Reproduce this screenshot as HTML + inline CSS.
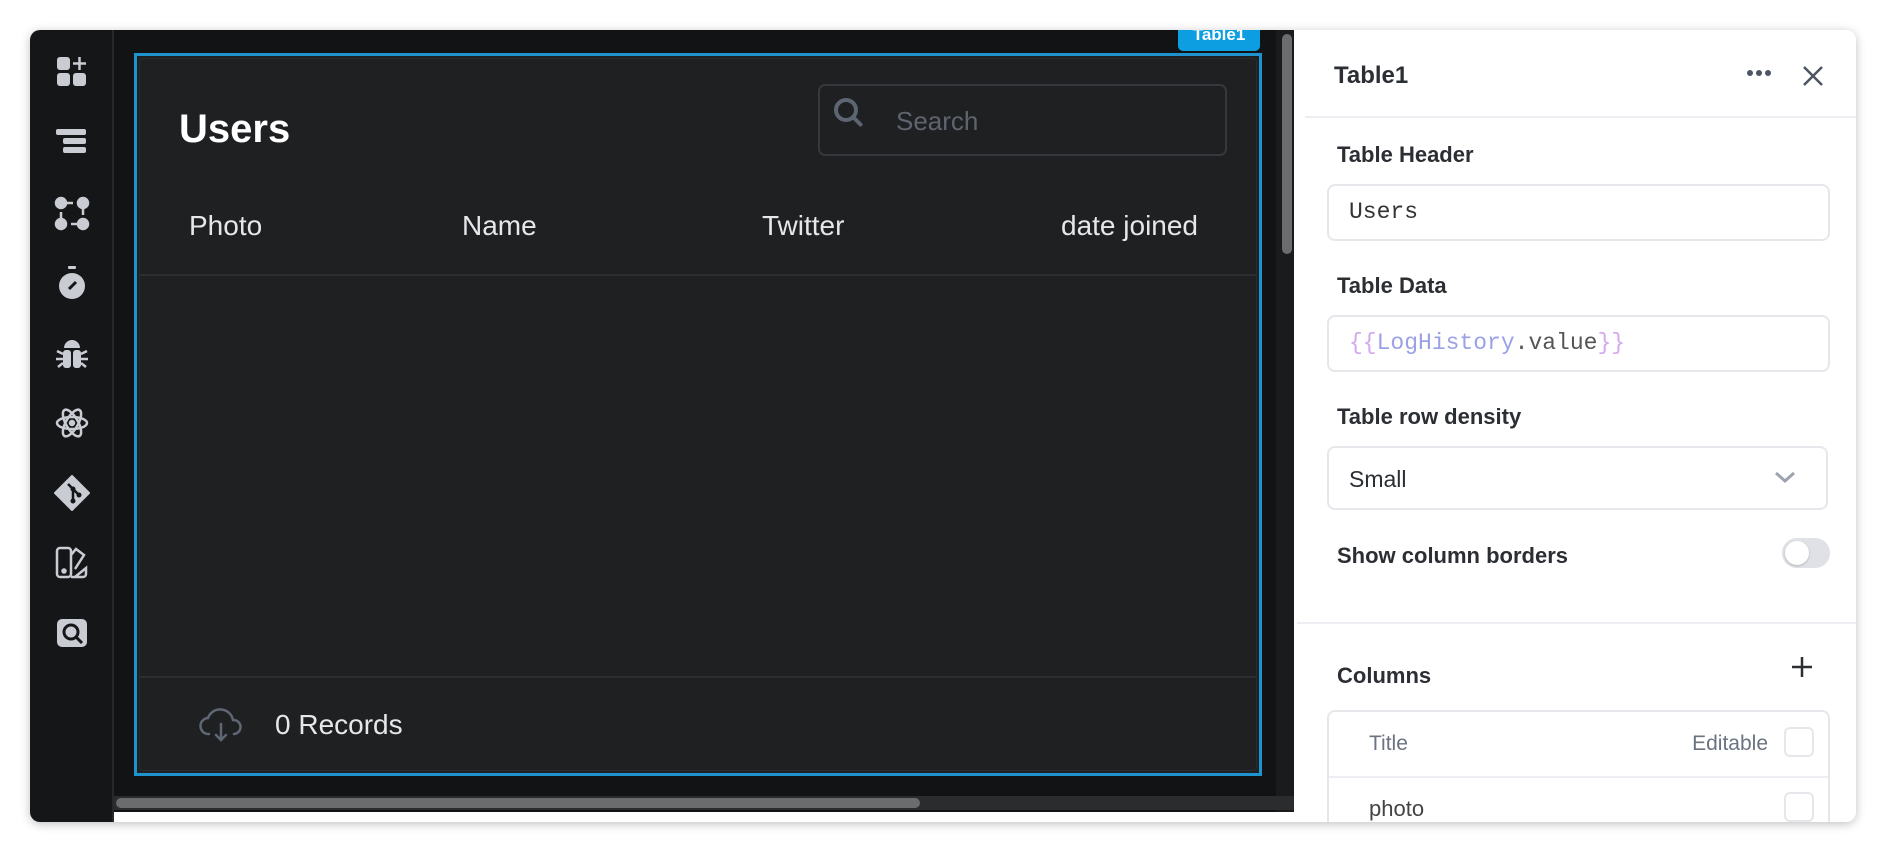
<!DOCTYPE html>
<html><head><meta charset="utf-8"><style>
*{margin:0;padding:0;box-sizing:border-box}
body{width:1886px;height:852px;background:#fff;position:relative;overflow:hidden;font-family:"Liberation Sans",sans-serif}
.abs{position:absolute}
#win{left:30px;top:30px;width:1826px;height:792px;border-radius:10px;overflow:hidden;background:#fff;box-shadow:0 2px 10px rgba(0,0,0,.25)}
#side{left:0;top:0;width:84px;height:792px;background:#151618;border-right:2px solid #26282b}
#canvas{left:84px;top:0;width:1180px;height:792px;background:#121315}
.ico{position:absolute;left:24px;width:36px;height:36px}
.th{position:absolute;font-size:28px;color:#e6e7ea}
.lbl{position:absolute;left:1307px;font-size:22px;color:#2b2e33;font-weight:bold}
.inp{position:absolute;left:1297px;width:503px;border:2px solid #e5e7eb;border-radius:8px;background:#fff}
.mono{font-family:"Liberation Mono",monospace;font-size:23px}
</style></head><body>
<div id="win" class="abs">
 <div id="side" class="abs">
  <svg class="ico" style="top:24px" viewBox="0 0 36 36" fill="#c9ccd3"><rect x="3" y="3" width="13" height="13" rx="3"/><rect x="3" y="19" width="13" height="13" rx="3"/><rect x="19" y="19" width="13" height="13" rx="3"/><path d="M25.5 3v13M19 9.5h13" stroke="#c9ccd3" stroke-width="2.5"/></svg>
  <svg class="ico" style="top:94px" viewBox="0 0 36 36" fill="#c9ccd3"><rect x="2" y="5" width="30" height="6" rx="2"/><rect x="9" y="14" width="23" height="6" rx="2"/><rect x="9" y="23" width="23" height="6" rx="2"/></svg>
  <svg class="ico" style="top:165px" viewBox="0 0 36 36" fill="#c9ccd3" stroke="#c9ccd3" stroke-width="2.5"><circle cx="7" cy="8" r="5"/><circle cx="29" cy="8" r="5"/><circle cx="7" cy="29" r="5"/><circle cx="29" cy="29" r="5"/><path d="M12 8h7M29 13v7M7 17v7M17 29h7"/></svg>
  <svg class="ico" style="top:235px" viewBox="0 0 36 36" fill="#c9ccd3"><rect x="14" y="1" width="8" height="3" rx="1"/><circle cx="18" cy="21" r="13"/><path d="M15 24l7-7" stroke="#151618" stroke-width="3"/></svg>
  <svg class="ico" style="top:305px" viewBox="0 0 36 36" fill="#c9ccd3"><path d="M10 13a8 8 0 0116 0z"/><rect x="9" y="15" width="8" height="18" rx="3"/><rect x="19" y="15" width="8" height="18" rx="3"/><path d="M3 16l6 3M33 16l-6 3M2 24h7M34 24h-7M4 32l5-4M32 32l-5-4" stroke="#c9ccd3" stroke-width="2.5"/></svg>
  <svg class="ico" style="top:375px" viewBox="0 0 36 36" fill="none" stroke="#c9ccd3" stroke-width="2.5"><ellipse cx="18" cy="18" rx="15" ry="6"/><ellipse cx="18" cy="18" rx="15" ry="6" transform="rotate(60 18 18)"/><ellipse cx="18" cy="18" rx="15" ry="6" transform="rotate(-60 18 18)"/><circle cx="18" cy="18" r="2" fill="#c9ccd3"/></svg>
  <svg class="ico" style="top:445px" viewBox="0 0 36 36"><path d="M18 1L35 18 18 35 1 18z" fill="#c9ccd3" stroke="#c9ccd3" stroke-width="2" stroke-linejoin="round"/><path d="M14 9l5 5M19 14v12M19 14l6 6" stroke="#151618" stroke-width="2.5" fill="none"/><circle cx="19" cy="14" r="2.5" fill="#151618"/><circle cx="19" cy="26" r="2.5" fill="#151618"/><circle cx="25" cy="20" r="2.5" fill="#151618"/></svg>
  <svg class="ico" style="top:515px" viewBox="0 0 36 36" fill="none" stroke="#c9ccd3" stroke-width="2.5"><rect x="3" y="3" width="14" height="29" rx="3"/><path d="M17 10l5-6 8 6-9 14M17 32h12a3 3 0 003-3v-6l-11 9"/><circle cx="10" cy="26" r="1.5" fill="#c9ccd3"/></svg>
  <svg class="ico" style="top:585px" viewBox="0 0 36 36"><rect x="3" y="4" width="30" height="28" rx="5" fill="#c9ccd3"/><circle cx="17" cy="17" r="7" fill="none" stroke="#151618" stroke-width="3"/><path d="M22 22l6 6" stroke="#151618" stroke-width="3"/></svg>
 </div>
 <div id="canvas" class="abs">
  <div class="abs" style="left:1162px;top:0;width:18px;height:782px;background:#1a1b1d"></div>
  <div class="abs" style="left:1168px;top:4px;width:10px;height:220px;background:#6b6c6e;border-radius:5px"></div>
  <div class="abs" style="left:0;top:766px;width:1180px;height:14px;background:#2b2c2e"></div>
  <div class="abs" style="left:2px;top:768px;width:804px;height:10px;background:#6b6c6e;border-radius:5px"></div>
  <div class="abs" style="left:0;top:782px;width:1180px;height:10px;background:#fff"></div>
  <div class="abs" style="left:1064px;top:-6px;width:82px;height:27px;background:#0c9ee0;border-radius:5px;color:#fff;font-size:17px;font-weight:bold;text-align:center;line-height:22px">Table1</div>
  <div class="abs" style="left:20px;top:23px;width:1128px;height:723px;border:3px solid #1f93cf;background:#1f2022">
   <div class="abs" style="left:2px;top:2px;right:2px;bottom:2px;border:1px solid #2a2c30;border-radius:4px"></div>
   <div class="abs" style="left:42px;top:51px;font-size:40px;font-weight:bold;color:#fff">Users</div>
   <div class="abs" style="left:681px;top:28px;width:409px;height:72px;border:2px solid #35383d;border-radius:7px">
    <svg class="abs" style="left:12px;top:10px" width="34" height="34" viewBox="0 0 34 34" fill="none" stroke="#5d6572" stroke-width="4"><circle cx="14" cy="14" r="10"/><path d="M21.5 21.5l7 7" stroke-linecap="round"/></svg>
    <div class="abs" style="left:76px;top:20px;font-size:26px;color:#5e646d">Search</div>
   </div>
   <div class="th" style="left:52px;top:154px">Photo</div>
   <div class="th" style="left:325px;top:154px">Name</div>
   <div class="th" style="left:625px;top:154px">Twitter</div>
   <div class="th" style="left:924px;top:154px">date joined</div>
   <div class="abs" style="left:3px;right:3px;top:218px;height:2px;background:#2c2e31"></div>
   <div class="abs" style="left:3px;right:3px;top:620px;height:2px;background:#2c2e31"></div>
   <svg class="abs" style="left:62px;top:650px" width="44" height="40" viewBox="0 0 44 40" fill="none" stroke="#5f6774" stroke-width="2.5" stroke-linecap="round"><path d="M10 28a8 8 0 01-1-16 13 13 0 0125 2 7 7 0 011 14"/><path d="M22 18v16M17 29l5 5 5-5"/></svg>
   <div class="abs" style="left:138px;top:653px;font-size:28px;color:#e6e7ea">0 Records</div>
  </div>
 </div>
 <div class="abs" style="left:1264px;top:0;width:562px;height:792px;background:#fff"></div>
 <div class="abs" style="left:1304px;top:32px;font-size:24px;font-weight:bold;color:#2b2e33">Table1</div>
 <svg class="abs" style="left:1716px;top:39px" width="26" height="8"><circle cx="4" cy="4" r="3" fill="#4b5563"/><circle cx="13" cy="4" r="3" fill="#4b5563"/><circle cx="22" cy="4" r="3" fill="#4b5563"/></svg>
 <svg class="abs" style="left:1771px;top:34px" width="24" height="24" stroke="#4b5563" stroke-width="2.5"><path d="M3 3l18 18M21 3L3 21"/></svg>
 <div class="abs" style="left:1275px;top:86px;width:551px;height:2px;background:#eceef1"></div>
 <div class="lbl" style="top:112px">Table Header</div>
 <div class="inp" style="top:154px;height:57px"><div class="abs mono" style="left:20px;top:13px;color:#333">Users</div></div>
 <div class="lbl" style="top:243px">Table Data</div>
 <div class="inp" style="top:285px;height:57px"><div class="abs mono" style="left:20px;top:13px;color:#9aa1e6"><span style="color:#d3a8ec">{{</span>LogHistory<span style="color:#555">.value</span><span style="color:#d3a8ec">}}</span></div></div>
 <div class="lbl" style="top:374px">Table row density</div>
 <div class="inp" style="top:416px;height:64px;width:501px"><div class="abs" style="left:20px;top:18px;font-size:23px;color:#2b2e33">Small</div>
  <svg class="abs" style="left:445px;top:22px" width="22" height="14" fill="none" stroke="#9ca3af" stroke-width="3"><path d="M2 3l9 8 9-8"/></svg></div>
 <div class="lbl" style="top:513px">Show column borders</div>
 <div class="abs" style="left:1752px;top:508px;width:48px;height:30px;border-radius:15px;background:#dfe1e6"><div class="abs" style="left:3px;top:3px;width:24px;height:24px;border-radius:50%;background:#fff;box-shadow:0 1px 2px rgba(0,0,0,.2)"></div></div>
 <div class="abs" style="left:1267px;top:592px;width:559px;height:2px;background:#eceef1"></div>
 <div class="lbl" style="top:633px">Columns</div>
 <svg class="abs" style="left:1760px;top:625px" width="24" height="24" stroke="#2b2e33" stroke-width="2.5"><path d="M12 2v20M2 12h20"/></svg>
 <div class="abs" style="left:1297px;top:680px;width:503px;height:140px;border:2px solid #e5e7eb;border-radius:8px">
  <div class="abs" style="left:40px;top:20px;font-size:21px;color:#6b7280">Title</div>
  <div class="abs" style="right:60px;top:20px;font-size:21px;color:#6b7280">Editable</div>
  <div class="abs" style="right:14px;top:15px;width:30px;height:30px;border:2px solid #e5e7eb;border-radius:6px"></div>
  <div class="abs" style="left:0;right:0;top:64px;height:2px;background:#eceef1"></div>
  <div class="abs" style="left:40px;top:84px;font-size:22px;color:#444">photo</div>
  <div class="abs" style="right:14px;top:80px;width:30px;height:30px;border:2px solid #e5e7eb;border-radius:6px"></div>
 </div>
</div>
</body></html>
